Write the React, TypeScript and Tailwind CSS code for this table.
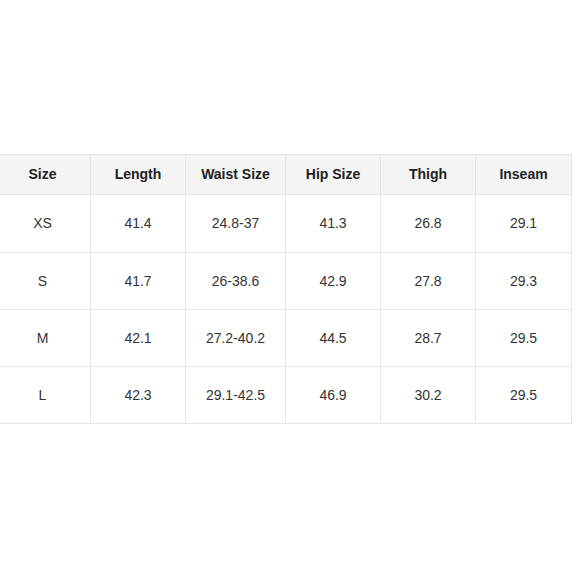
import React from 'react';

const COLS = [
  { label: 'Size', w: 'w-[96px]' },
  { label: 'Length', w: 'w-[95px]' },
  { label: 'Waist Size', w: 'w-[100px]' },
  { label: 'Hip Size', w: 'w-[95px]' },
  { label: 'Thigh', w: 'w-[95px]' },
  { label: 'Inseam', w: 'w-[96px]' },
];

const ROWS = [
  ['XS', '41.4', '24.8-37', '41.3', '26.8', '29.1'],
  ['S', '41.7', '26-38.6', '42.9', '27.8', '29.3'],
  ['M', '42.1', '27.2-40.2', '44.5', '28.7', '29.5'],
  ['L', '42.3', '29.1-42.5', '46.9', '30.2', '29.5'],
];

export default function App() {
  return (
    <div className="w-[580px] h-[580px] bg-white overflow-hidden pt-[154px] font-['Liberation_Sans',Arial,sans-serif] text-[14px]">
      <div className="ml-[-5px] flex flex-col">
        <div className="flex">
          {COLS.map((c) => (
            <div
              key={c.label}
              className={`${c.w} h-[41px] shrink-0 flex items-center justify-center bg-[#f4f4f4] border-t border-b border-r border-[#e6e6e6] font-bold text-[#222]`}
            >
              {c.label}
            </div>
          ))}
        </div>
        {ROWS.map((row, i) => (
          <div key={row[0]} className="flex">
            {row.map((v, j) => (
              <div
                key={j}
                className={`${COLS[j].w} ${i === 0 ? 'h-[58px]' : 'h-[57px]'} shrink-0 flex items-center justify-center border-b border-r border-[#e6e6e6] text-[#333]`}
              >
                {v}
              </div>
            ))}
          </div>
        ))}
      </div>
    </div>
  );
}
